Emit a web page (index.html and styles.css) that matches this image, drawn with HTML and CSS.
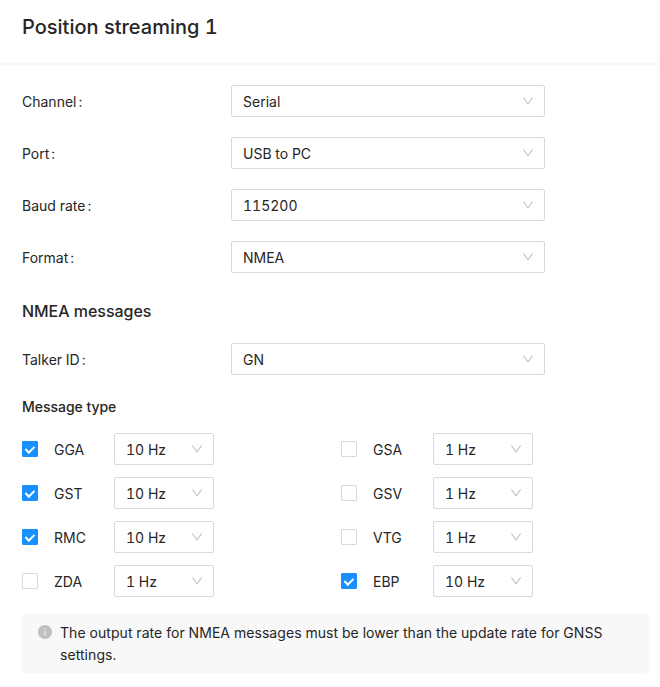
FILE: index.html
```html
<!DOCTYPE html>
<html lang="en">
<head>
<meta charset="utf-8">
<title>Position streaming 1</title>
<link rel="stylesheet" href="styles.css">
</head>
<body>
<svg class="defs" aria-hidden="true">
  <symbol id="down" viewBox="64 64 896 896"><path d="M884 256h-75c-5.1 0-9.900 2.500-12.900 6.600L512 654.200 227.900 262.600c-3-4.100-7.800-6.600-12.900-6.600h-75c-6.500 0-10.300 7.400-6.500 12.700l352.600 486.100c12.800 17.600 39 17.600 51.700 0l352.600-486.100c3.900-5.300.1-12.700-6.400-12.700z"/></symbol>
</svg>
<header class="header"><h1>Position streaming 1</h1></header>
<main class="content">
  <div class="row"><span class="label">Channel<i>:</i></span><div class="select"><span>Serial</span><svg><use href="#down"/></svg></div></div>
  <div class="row"><span class="label">Port<i>:</i></span><div class="select"><span>USB to PC</span><svg><use href="#down"/></svg></div></div>
  <div class="row"><span class="label">Baud rate<i>:</i></span><div class="select"><span>115200</span><svg><use href="#down"/></svg></div></div>
  <div class="row"><span class="label">Format<i>:</i></span><div class="select"><span>NMEA</span><svg><use href="#down"/></svg></div></div>
  <h2>NMEA messages</h2>
  <div class="row"><span class="label">Talker ID<i>:</i></span><div class="select"><span>GN</span><svg><use href="#down"/></svg></div></div>
  <h3>Message type</h3>
  <div class="messages">
    <div class="message"><span class="check on"></span><span class="name">GGA</span><div class="select small"><span>10 Hz</span><svg><use href="#down"/></svg></div></div>
    <div class="message"><span class="check"></span><span class="name">GSA</span><div class="select small"><span>1 Hz</span><svg><use href="#down"/></svg></div></div>
    <div class="message"><span class="check on"></span><span class="name">GST</span><div class="select small"><span>10 Hz</span><svg><use href="#down"/></svg></div></div>
    <div class="message"><span class="check"></span><span class="name">GSV</span><div class="select small"><span>1 Hz</span><svg><use href="#down"/></svg></div></div>
    <div class="message"><span class="check on"></span><span class="name">RMC</span><div class="select small"><span>10 Hz</span><svg><use href="#down"/></svg></div></div>
    <div class="message"><span class="check"></span><span class="name">VTG</span><div class="select small"><span>1 Hz</span><svg><use href="#down"/></svg></div></div>
    <div class="message"><span class="check"></span><span class="name">ZDA</span><div class="select small"><span>1 Hz</span><svg><use href="#down"/></svg></div></div>
    <div class="message"><span class="check on"></span><span class="name">EBP</span><div class="select small"><span>10 Hz</span><svg><use href="#down"/></svg></div></div>
  </div>
  <div class="note">
    <svg viewBox="64 64 896 896"><path d="M512 64C264.600 64 64 264.600 64 512s200.600 448 448 448 448-200.600 448-448S759.400 64 512 64zm32 664c0 4.400-3.600 8-8 8h-48c-4.400 0-8-3.600-8-8V456c0-4.400 3.600-8 8-8h48c4.400 0 8 3.600 8 8v272zm-32-344a48 48 0 1 1 0-96 48 48 0 0 1 0 96z"/></svg>
    <p>The output rate for NMEA messages must be lower than the update rate for GNSS settings.</p>
  </div>
</main>
</body>
</html>
```
FILE: styles.css
```css
*, *::after { box-sizing: border-box; }
body { margin: 0; background: #fff; color: #262626; font: 14px/22px Inter, sans-serif; font-variant-numeric: tabular-nums; }
.defs { display: none; }
.header { height: 65px; padding: 13px 22px 0; border-bottom: 2px solid #f8f8f8; }
h1, h2, h3, p { margin: 0; }
h1 { font-size: 20px; line-height: 28px; font-weight: 500; }
.content { padding: 20px 11px 0 22px; }
.row { display: flex; align-items: center; height: 32px; margin-bottom: 20px; }
.label { width: 209px; padding-top: 2px; }
.label i { margin-left: 2px; font-style: normal; }
.select { display: flex; align-items: center; justify-content: space-between; width: 314px; height: 32px; padding: 0 10px 0 11px; border: 1px solid #d9d9d9; border-radius: 2px; }
.select span { padding-top: 2px; }
.select svg { width: 12px; height: 12px; fill: #bfbfbf; }
h2 { margin: 27px 0 21px; font-size: 16px; line-height: 22px; font-weight: 500; letter-spacing: -0.04px; }
h3 { margin: 21px 0 15px; font-size: 14px; line-height: 22px; font-weight: 500; letter-spacing: -0.03px; }
.messages { display: grid; grid-template-columns: 319px 1fr; row-gap: 12px; }
.message { display: flex; align-items: center; height: 32px; }
.check { width: 16px; height: 16px; border: 1px solid #d9d9d9; border-radius: 1px; display: flex; align-items: center; justify-content: center; }
.check.on { background: #1890ff; border-color: #1890ff; }
.check.on::after { content: ""; width: 5.500px; height: 9px; border: solid #fff; border-width: 0 2px 2px 0; transform: translateY(-1px) rotate(45deg); }
.name { width: 60px; margin-left: 16px; padding-top: 2px; }
.small { width: 100px; }
.note { display: flex; margin-top: 16px; height: 60px; padding: 9px 15px; background: #f8f8f8; border-radius: 4px; }
.note svg { width: 14px; height: 14px; margin: 3px 8px 0 1px; flex: none; fill: #c0c0c0; }
.note p { letter-spacing: 0.06px; }
```
